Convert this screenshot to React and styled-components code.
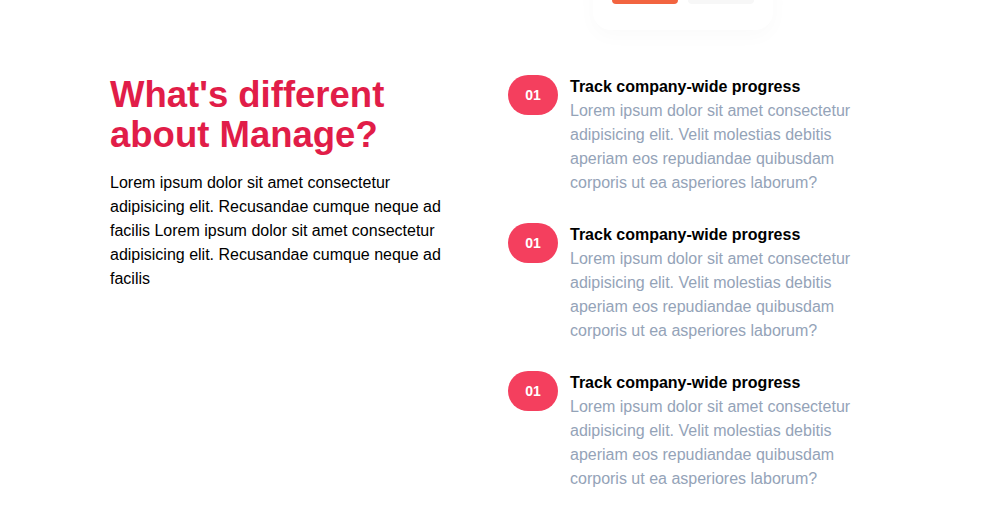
import React from "react";
import styled, { createGlobalStyle } from "styled-components";

const GlobalStyle = createGlobalStyle`
  body {
    margin: 0;
    background: #ffffff;
    font-family: "Liberation Sans", Arial, sans-serif;
    overflow: hidden;
  }
`;

const TopStrip = styled.div`
  display: flex;
  justify-content: center;
  padding-left: 374px;
  height: 32px;
`;

const Card = styled.div`
  display: flex;
  gap: 10px;
  margin-top: -36px;
  padding: 0 19px 26px;
  height: 40px;
  background: #fff;
  border-radius: 18px;
  box-shadow: 0 6px 20px rgba(0, 0, 0, 0.025);
`;

const TabButton = styled.div`
  width: 66px;
  height: 40px;
  border-radius: 4px;
  background: ${(p) => (p.active ? "#f26440" : "#f7f7f7")};
`;

const Section = styled.section`
  display: flex;
  width: 771px;
  margin: 43px auto 0;
`;

const Left = styled.div`
  width: 340px;
  margin-right: 58px;
`;

const Heading = styled.h2`
  margin: 0 0 16px;
  font-size: 36.5px;
  line-height: 40px;
  font-weight: 700;
  color: #e11d48;
`;

const Intro = styled.p`
  margin: 0;
  font-size: 16px;
  line-height: 24px;
  color: #000;
`;

const Right = styled.div`
  flex: 1;
  display: flex;
  flex-direction: column;
  gap: 28px;
`;

const Item = styled.div`
  display: flex;
  align-items: flex-start;
`;

const Badge = styled.div`
  flex: none;
  width: 50px;
  height: 40px;
  border-radius: 20px;
  background: #f43f5e;
  color: #fff;
  font-size: 14px;
  font-weight: 700;
  display: flex;
  align-items: center;
  justify-content: center;
  margin-right: 12px;
`;

const Title = styled.h3`
  margin: 0;
  font-size: 16px;
  line-height: 24px;
  font-weight: 700;
  color: #000;
`;

const Desc = styled.p`
  margin: 0;
  font-size: 16px;
  line-height: 24px;
  color: #94a3b8;
  width: 290px;
`;

const items = [1, 2, 3];

export default function App() {
  return (
    <>
      <GlobalStyle />
      <TopStrip>
        <Card>
          <TabButton active />
          <TabButton />
        </Card>
      </TopStrip>
      <Section>
        <Left>
          <Heading>What's different about Manage?</Heading>
          <Intro>
            Lorem ipsum dolor sit amet consectetur adipisicing elit. Recusandae
            cumque neque ad facilis Lorem ipsum dolor sit amet consectetur
            adipisicing elit. Recusandae cumque neque ad facilis
          </Intro>
        </Left>
        <Right>
          {items.map((i) => (
            <Item key={i}>
              <Badge>01</Badge>
              <div>
                <Title>Track company-wide progress</Title>
                <Desc>
                  Lorem ipsum dolor sit amet consectetur adipisicing elit. Velit
                  molestias debitis aperiam eos repudiandae quibusdam corporis
                  ut ea asperiores laborum?
                </Desc>
              </div>
            </Item>
          ))}
        </Right>
      </Section>
    </>
  );
}
